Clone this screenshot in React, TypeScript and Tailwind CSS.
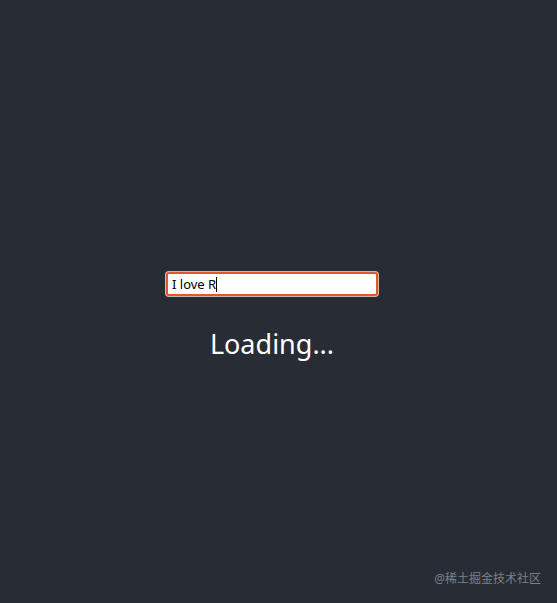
export default function App() {
  return (
    <div
      className="min-h-[603px] bg-[#282c34] flex flex-col items-center pr-[13px] pt-[271px] relative"
      style={{ fontFamily: '"Noto Sans", "Noto Sans CJK SC", sans-serif' }}
    >
      <div className="rounded-[4px] p-px bg-[#c9b8ae]">
        <div className="w-[212px] h-[24px] rounded-[3px] border-2 border-[#e0582a] bg-white flex items-center px-[4px]">
          <span className="text-[13px] text-black leading-none">I love R</span>
          <span className="w-px h-[15px] bg-black" />
        </div>
      </div>
      <div className="mt-[27px] text-[27px] leading-[40px] text-white">Loading...</div>
      <div className="absolute right-[16px] top-[570px] text-[12px] text-[#7d8087]">@稀土掘金技术社区</div>
    </div>
  );
}
